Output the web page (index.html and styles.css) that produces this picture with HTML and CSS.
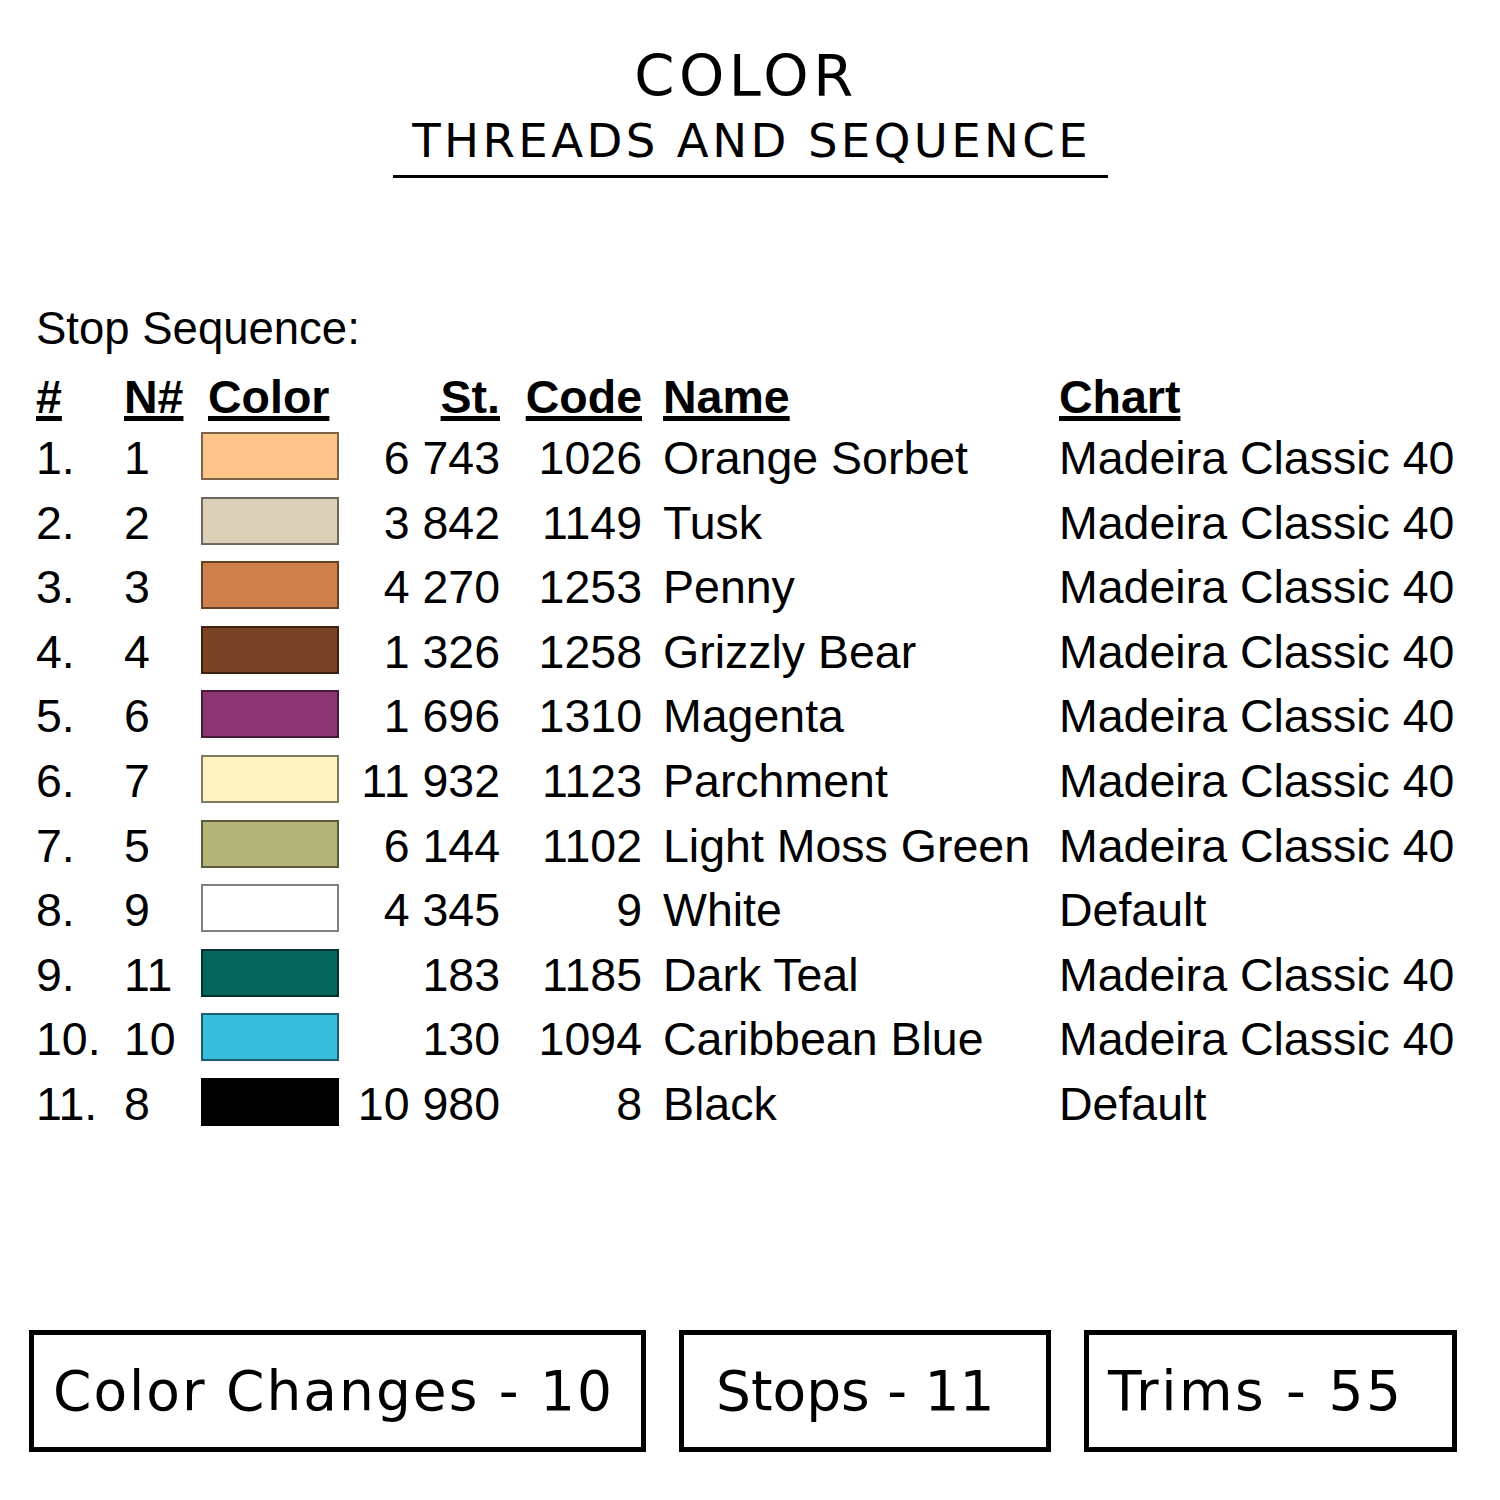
FILE: index.html
```html
<!DOCTYPE html>
<html lang="en">
<head>
<meta charset="utf-8">
<title>Color - Threads and Sequence</title>
<link rel="stylesheet" href="styles.css">
</head>
<body>
<div class="page">
  <header class="title-block">
    <h1 class="title">COLOR</h1>
    <div class="subtitle-wrap"><h2 class="subtitle">THREADS AND SEQUENCE</h2></div>
  </header>

  <section class="sequence">
    <p class="seq-label">Stop Sequence:</p>
    <div class="row head">
      <span class="c-num">#</span>
      <span class="c-n">N#</span>
      <span class="c-color">Color</span>
      <span class="c-st">St.</span>
      <span class="c-code">Code</span>
      <span class="c-name">Name</span>
      <span class="c-chart">Chart</span>
    </div>
    <div class="row"><span class="c-num">1.</span><span class="c-n">1</span><span class="c-sw"><i class="swatch" style="background:#fdc48c"></i></span><span class="c-st">6 743</span><span class="c-code">1026</span><span class="c-name">Orange Sorbet</span><span class="c-chart">Madeira Classic 40</span></div>
    <div class="row"><span class="c-num">2.</span><span class="c-n">2</span><span class="c-sw"><i class="swatch" style="background:#dccfb8"></i></span><span class="c-st">3 842</span><span class="c-code">1149</span><span class="c-name">Tusk</span><span class="c-chart">Madeira Classic 40</span></div>
    <div class="row"><span class="c-num">3.</span><span class="c-n">3</span><span class="c-sw"><i class="swatch" style="background:#cd804b"></i></span><span class="c-st">4 270</span><span class="c-code">1253</span><span class="c-name">Penny</span><span class="c-chart">Madeira Classic 40</span></div>
    <div class="row"><span class="c-num">4.</span><span class="c-n">4</span><span class="c-sw"><i class="swatch" style="background:#7a4326"></i></span><span class="c-st">1 326</span><span class="c-code">1258</span><span class="c-name">Grizzly Bear</span><span class="c-chart">Madeira Classic 40</span></div>
    <div class="row"><span class="c-num">5.</span><span class="c-n">6</span><span class="c-sw"><i class="swatch" style="background:#8b3672"></i></span><span class="c-st">1 696</span><span class="c-code">1310</span><span class="c-name">Magenta</span><span class="c-chart">Madeira Classic 40</span></div>
    <div class="row"><span class="c-num">6.</span><span class="c-n">7</span><span class="c-sw"><i class="swatch" style="background:#fdf3c0"></i></span><span class="c-st">11 932</span><span class="c-code">1123</span><span class="c-name">Parchment</span><span class="c-chart">Madeira Classic 40</span></div>
    <div class="row"><span class="c-num">7.</span><span class="c-n">5</span><span class="c-sw"><i class="swatch" style="background:#b2b577"></i></span><span class="c-st">6 144</span><span class="c-code">1102</span><span class="c-name">Light Moss Green</span><span class="c-chart">Madeira Classic 40</span></div>
    <div class="row"><span class="c-num">8.</span><span class="c-n">9</span><span class="c-sw"><i class="swatch" style="background:#ffffff"></i></span><span class="c-st">4 345</span><span class="c-code">9</span><span class="c-name">White</span><span class="c-chart">Default</span></div>
    <div class="row"><span class="c-num">9.</span><span class="c-n">11</span><span class="c-sw"><i class="swatch" style="background:#03655b"></i></span><span class="c-st">183</span><span class="c-code">1185</span><span class="c-name">Dark Teal</span><span class="c-chart">Madeira Classic 40</span></div>
    <div class="row"><span class="c-num">10.</span><span class="c-n">10</span><span class="c-sw"><i class="swatch" style="background:#38bcdc"></i></span><span class="c-st">130</span><span class="c-code">1094</span><span class="c-name">Caribbean Blue</span><span class="c-chart">Madeira Classic 40</span></div>
    <div class="row"><span class="c-num">11.</span><span class="c-n">8</span><span class="c-sw"><i class="swatch" style="background:#000000"></i></span><span class="c-st">10 980</span><span class="c-code">8</span><span class="c-name">Black</span><span class="c-chart">Default</span></div>
  </section>

  <footer class="stats">
    <div class="stat stat-changes">Color Changes - 10</div>
    <div class="stat stat-stops">Stops - 11</div>
    <div class="stat stat-trims">Trims - 55</div>
  </footer>
</div>
</body>
</html>
```

FILE: styles.css
```css
html, body {
  margin: 0;
  padding: 0;
  background: #ffffff;
  color: #000000;
}

.page {
  width: 1500px;
  height: 1500px;
  padding-top: 47px;
  box-sizing: border-box;
}

/* ---------- title ---------- */
.title-block {
  text-align: center;
}

.title {
  margin: 0;
  font-family: "DejaVu Sans", "Noto Sans", sans-serif;
  font-weight: 400;
  font-size: 57.6px;
  line-height: 60px;
  letter-spacing: 4.5px;
  padding-right: 8px;
}

.subtitle-wrap {
  width: 715px;
  margin: 9px auto 0;
  padding-bottom: 9px;
  border-bottom: 3px solid #000;
}

.subtitle {
  margin: 0;
  font-family: "DejaVu Sans", "Noto Sans", sans-serif;
  font-weight: 400;
  font-size: 46.6px;
  line-height: 50px;
  letter-spacing: 3.4px;
  padding-left: 3.4px;
}

/* ---------- sequence table ---------- */
.sequence {
  margin-top: 126px;
  margin-left: 36px;
  font-family: "Liberation Sans", Arial, sans-serif;
  font-size: 46.5px;
}

.seq-label {
  margin: 0 0 15px 0;
  font-size: 45.5px;
  line-height: 50px;
}

.row {
  display: grid;
  grid-template-columns: 88px 77px 138px 161px 142px 417px auto;
  height: 64.6px;
  line-height: 64.6px;
  white-space: nowrap;
}

.row.head {
  height: 57px;
  line-height: 57px;
  font-weight: 700;
}

.row.head span {
  text-decoration: underline;
  text-decoration-thickness: 5px;
  text-underline-offset: 3px;
}

.row.head .c-color {
  padding-left: 7px;
}

.c-st,
.c-code {
  text-align: right;
}

.c-name {
  padding-left: 21px;
}

.c-sw {
  display: block;
}

.swatch {
  display: block;
  box-sizing: border-box;
  width: 138px;
  height: 48px;
  margin-top: 6px;
  border: 2px solid rgba(0, 0, 0, 0.5);
}

/* ---------- stats boxes ---------- */
.stats {
  display: flex;
  margin-top: 193px;
  padding-left: 29px;
  gap: 33px;
}

.stat {
  box-sizing: border-box;
  height: 122px;
  border: 5px solid #000;
  font-family: "DejaVu Sans", "Noto Sans", sans-serif;
  font-weight: 400;
  font-size: 55px;
  line-height: 112px;
  letter-spacing: 2px;
  white-space: nowrap;
}

.stat-changes {
  width: 617px;
  padding-left: 19px;
}

.stat-stops {
  width: 372px;
  padding-left: 32px;
  letter-spacing: 0;
}

.stat-trims {
  width: 373px;
  padding-left: 19px;
  letter-spacing: 2.5px;
}
```
